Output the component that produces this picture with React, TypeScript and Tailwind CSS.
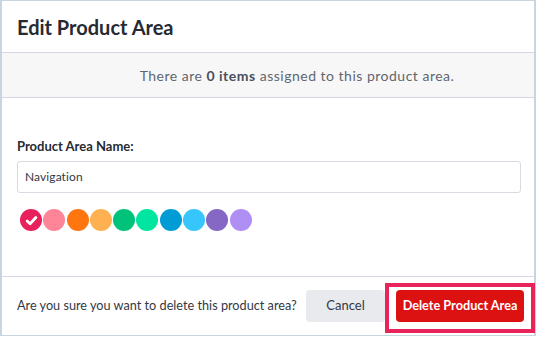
import React from "react";

const colors = [
  "#e8205c",
  "#fe8497",
  "#ff7510",
  "#ffb152",
  "#00c27a",
  "#00e6a0",
  "#009cd6",
  "#36c6fc",
  "#8468c4",
  "#b08ff5",
];

export default function App() {
  return (
    <div className="w-[538px] h-[337px] bg-white" style={{ fontFamily: "Lato, 'Open Sans', sans-serif" }}>
      <div className="relative w-[536px] h-[336px] border-t border-b border-l-2 border-r-2 border-[#c8d5df] flex flex-col text-[#2b2f38]">
        <div className="h-[52px] flex items-center pl-[15px] border-b border-[#d3d8e2]">
          <h1 className="text-[20px] font-bold text-[#262a33]">Edit Product Area</h1>
        </div>
        <div className="h-[45px] bg-[#f7f7f8] border-b border-[#d3d8e2] flex items-center justify-center pl-[58px] text-[14px] tracking-[0.5px] text-[#60666f]">
          <span>
            There are <b className="font-bold text-[#4a505c]">0 items</b> assigned to this product area.
          </span>
        </div>
        <div className="flex-1 px-[15px] pt-[40px]">
          <div className="text-[13px] font-bold text-[#262a33] leading-[16px]">Product Area Name:</div>
          <div className="mt-[7px] h-[32px] w-[504px] border border-[#d8dbe2] rounded-[3px] flex items-center pl-[7px] text-[12px] tracking-[0.1px] text-[#333844]">
            Navigation
          </div>
          <div className="mt-[16px] ml-[3px] flex gap-[1.3px]">
            {colors.map((c, i) => (
              <div
                key={c}
                className="w-[22px] h-[22px] rounded-full flex items-center justify-center"
                style={{ backgroundColor: c }}
              >
                {i === 0 && (
                  <svg width="13" height="13" viewBox="0 0 12 12">
                    <path d="M2 6.4 L4.7 9 L10 3.3" fill="none" stroke="white" strokeWidth="2.6" strokeLinecap="round" strokeLinejoin="round" />
                  </svg>
                )}
              </div>
            ))}
          </div>
        </div>
        <div className="h-[59px] border-t border-[#d3d8e2] flex items-center pl-[15px] pr-[10px]">
          <span className="text-[12.7px] text-[#333844]">Are you sure you want to delete this product area?</span>
          <div className="ml-auto flex items-center gap-[11px]">
            <button className="w-[79px] h-[32px] rounded-[4px] bg-[#e9eaee] text-[13px] text-[#333844]">Cancel</button>
            <button className="w-[128px] h-[32px] rounded-[4px] bg-[#dc1111] text-[12.7px] font-bold text-white">Delete Product Area</button>
          </div>
        </div>
        <div className="absolute left-[383px] top-[282px] w-[150px] h-[50px] border-4 border-[#e8245a] pointer-events-none" />
      </div>
    </div>
  );
}
